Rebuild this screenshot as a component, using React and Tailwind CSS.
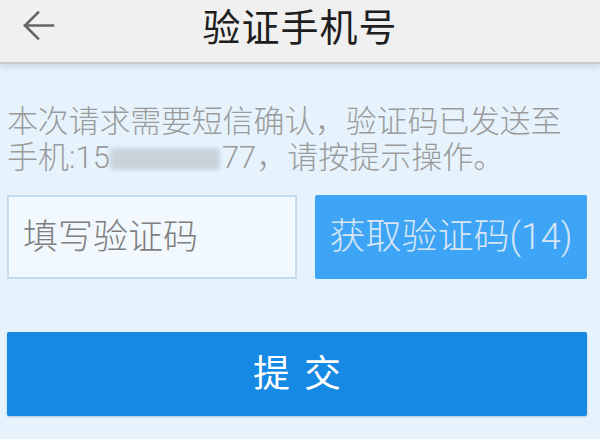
import React from "react";

export default function App() {
  const font = { fontFamily: "Roboto, 'Noto Sans CJK SC', sans-serif" };
  return (
    <div className="w-[600px] h-[439px] bg-[#e6f3fd] overflow-hidden" style={font}>
      <div className="relative h-[64px] bg-[#f0f0f0] flex items-center justify-center border-b-2 border-[#c9cdd0] shadow-[0_3px_6px_rgba(150,170,190,0.35)]">
        <svg className="absolute left-[22px] top-[9px]" width="33" height="33" viewBox="0 0 33 33" fill="none">
          <path d="M31 16.5H3M16 3.5L3 16.5L16 29.5" stroke="#666" strokeWidth="2.6" strokeLinecap="square" />
        </svg>
        <span className="text-[38px] leading-none text-[#1e1e1e] tracking-[1px] -mt-[6px]">验证手机号</span>
      </div>
      <div className="pl-[7px] pr-[13px] pt-[40px]">
        <div className="text-[31px] leading-[36px] text-[#9b9b9b] font-light">
          <div className="whitespace-nowrap tracking-[-0.2px]">本次请求需要短信确认，验证码已发送至</div>
          <div className="whitespace-nowrap flex items-center">
            <span>手机:15</span>
            <span className="inline-block w-[110px] h-[22px] mt-[2px] rounded-[4px] bg-[#c8d3dc] blur-[2px]"></span>
            <span className="ml-[2px]">77，请按提示操作。</span>
          </div>
        </div>
        <div className="mt-[19px] flex gap-[18px] h-[84px]">
          <div className="w-[290px] h-full border-2 border-[#c5dcee] bg-[#f1f8fe] flex items-center pl-[14px]">
            <span className="text-[35px] text-[#7f7f7f] leading-none font-light">填写验证码</span>
          </div>
          <div className="flex-1 h-full bg-[#3ea5f6] rounded-[2px] flex items-center justify-center">
            <span className="text-[36px] text-[#d6e6f4] leading-none font-light">获取验证码(14)</span>
          </div>
        </div>
        <div className="mt-[53px] h-[84px] bg-[#1589e3] rounded-[2px] shadow-[0_1px_2px_rgba(0,60,120,0.25)] flex items-center justify-center">
          <span className="text-[37px] text-white leading-none tracking-[14px] pl-[14px]">提交</span>
        </div>
      </div>
    </div>
  );
}
